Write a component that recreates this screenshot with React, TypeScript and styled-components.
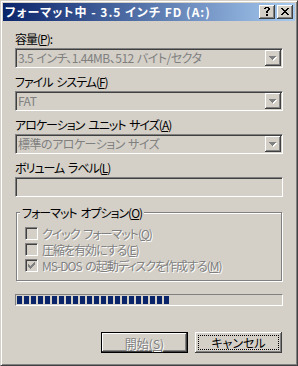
import React from 'react';
import styled, { createGlobalStyle, css } from 'styled-components';

const FACE = '#d4d0c8';
const SHADOW = '#808080';
const DARK = '#404040';
const LIGHT = '#ffffff';
const NAVY = '#0a246a';

const GlobalStyle = createGlobalStyle`
  html, body {
    margin: 0;
    padding: 0;
    background: ${FACE};
  }
`;

const raised = css`
  box-shadow: inset -1px -1px 0 ${DARK}, inset 1px 1px 0 ${LIGHT}, inset -2px -2px 0 ${SHADOW};
`;

const sunken = css`
  border: 1px solid;
  border-color: ${SHADOW} ${LIGHT} ${LIGHT} ${SHADOW};
  box-shadow: inset 1px 1px 0 ${DARK}, inset -1px -1px 0 ${FACE};
`;

const disabledText = css`
  color: ${SHADOW};
  text-shadow: 1px 1px 0 ${LIGHT};
`;

// pixel patterns for the classic glyphs
const HELP = [
  '.####.',
  '##..##',
  '....##',
  '...##.',
  '..##..',
  '..##..',
  '......',
  '..##..',
  '..##..',
];

const CLOSE = [
  '##....##',
  '.##..##.',
  '..####..',
  '...##...',
  '..####..',
  '.##..##.',
  '##....##',
];

const ARROW = ['#######', '.#####.', '..###..', '...#...'];

const CHECK = [
  '......#',
  '.....##',
  '#...###',
  '##.###.',
  '#####..',
  '.###...',
  '..#....',
];

const Glyph: React.FC<{ rows: string[]; color: string; emboss?: boolean }> = ({ rows, color, emboss }) => {
  const d = rows
    .map((r, y) => [...r].map((c, x) => (c === '#' ? `M${x} ${y}h1v1h-1z` : '')).join(''))
    .join('');
  const w = rows[0].length + (emboss ? 1 : 0);
  const h = rows.length + (emboss ? 1 : 0);
  return (
    <GlyphSvg width={w} height={h} viewBox={`0 0 ${w} ${h}`} shapeRendering='crispEdges'>
      {emboss && <path d={d} fill={LIGHT} transform='translate(1 1)' />}
      <path d={d} fill={color} />
    </GlyphSvg>
  );
};

const Combo: React.FC<{ value: string }> = ({ value }) => (
  <ComboBox>
    <ComboText>{value}</ComboText>
    <DropButton>
      <Glyph rows={ARROW} color={SHADOW} emboss />
    </DropButton>
  </ComboBox>
);

const Check: React.FC<{ checked?: boolean; children: React.ReactNode }> = ({ checked, children }) => (
  <CheckRow>
    <CheckBox>{checked && <Glyph rows={CHECK} color={SHADOW} />}</CheckBox>
    <CheckLabel>{children}</CheckLabel>
  </CheckRow>
);

const App: React.FC = () => (
  <>
    <GlobalStyle />
    <Window>
      <TitleBar>
        <Title>フォーマット中 - 3.5 インチ FD (A:)</Title>
        <CaptionButton $pad='2px 0 0 5px' aria-label='ヘルプ'>
          <Glyph rows={HELP} color='#000' />
        </CaptionButton>
        <CaptionButton $pad='3px 0 0 4px' $gap aria-label='閉じる'>
          <Glyph rows={CLOSE} color='#000' />
        </CaptionButton>
      </TitleBar>
      <Body>
        <Field>
          <Label>
            容量(<u>P</u>):
          </Label>
          <Combo value='3.5 インチ、1.44MB、512 バイト/セクタ' />
        </Field>
        <Field>
          <Label>
            ファイル システム(<u>F</u>)
          </Label>
          <Combo value='FAT' />
        </Field>
        <Field>
          <Label>
            アロケーション ユニット サイズ(<u>A</u>)
          </Label>
          <Combo value='標準のアロケーション サイズ' />
        </Field>
        <Field>
          <Label>
            ボリューム ラベル(<u>L</u>)
          </Label>
          <TextBox />
        </Field>
        <Group>
          <GroupTitle>
            フォーマット オプション(<u>O</u>)
          </GroupTitle>
          <Check>
            クイック フォーマット(<u>Q</u>)
          </Check>
          <Check>
            圧縮を有効にする(<u>E</u>)
          </Check>
          <Check checked>
            MS-DOS の起動ディスクを作成する(<u>M</u>)
          </Check>
        </Group>
        <Progress>
          {Array.from({ length: 22 }).map((_, i) => (
            <Chunk key={i} />
          ))}
        </Progress>
        <ButtonRow>
          <PushButton $isDefault disabled>
            <ButtonText $disabled>
              開始(<u>S</u>)
            </ButtonText>
          </PushButton>
          <PushButton>
            <FocusRect>キャンセル</FocusRect>
          </PushButton>
        </ButtonRow>
      </Body>
    </Window>
  </>
);

const Window = styled.div`
  box-sizing: border-box;
  width: 298px;
  height: 366px;
  padding: 2px;
  display: flex;
  flex-direction: column;
  background: ${FACE};
  border: 1px solid;
  border-color: ${FACE} ${DARK} ${DARK} ${FACE};
  box-shadow: inset 1px 1px 0 ${LIGHT}, inset -1px -1px 0 ${SHADOW};
  font-family: 'Noto Sans CJK JP', 'Liberation Sans', sans-serif;
  font-size: 12px;
  font-feature-settings: 'palt' 1;
  letter-spacing: -1px;
  word-spacing: 2px;
  color: #000;
`;

const TitleBar = styled.div`
  height: 18px;
  flex-shrink: 0;
  display: flex;
  align-items: center;
  padding: 0 2px;
  background: linear-gradient(to right, ${NAVY}, #a6caf0);
`;

const Title = styled.span`
  flex: 1;
  color: #fff;
  font-weight: bold;
  line-height: 18px;
  letter-spacing: 1px;
  word-spacing: 0;
  white-space: nowrap;
`;

const CaptionButton = styled.button<{ $pad: string; $gap?: boolean }>`
  box-sizing: border-box;
  width: 16px;
  height: 14px;
  margin: 0 0 0 ${(p) => (p.$gap ? 2 : 0)}px;
  padding: ${(p) => p.$pad};
  display: flex;
  align-items: flex-start;
  justify-content: flex-start;
  background: ${FACE};
  border: none;
  ${raised}
`;

const GlyphSvg = styled.svg`
  display: block;
  flex-shrink: 0;
`;

const Body = styled.div`
  display: flex;
  flex-direction: column;
  padding: 11px 12px 0;
`;

const Field = styled.div`
  display: flex;
  flex-direction: column;
  margin-bottom: 7px;
`;

const Label = styled.div`
  height: 14px;
  line-height: 14px;
  margin-bottom: 2px;
  white-space: nowrap;
`;

const ComboBox = styled.div`
  box-sizing: border-box;
  height: 20px;
  padding: 1px;
  display: flex;
  align-items: center;
  background: ${FACE};
  ${sunken}
`;

const ComboText = styled.span`
  flex: 1;
  padding-left: 1px;
  line-height: 16px;
  letter-spacing: -0.5px;
  word-spacing: 1px;
  color: ${SHADOW};
  white-space: nowrap;
  overflow: hidden;
`;

const DropButton = styled.span`
  box-sizing: border-box;
  width: 16px;
  height: 16px;
  padding: 6px 0 0 4px;
  display: flex;
  align-items: flex-start;
  background: ${FACE};
  ${raised}
`;

const TextBox = styled.div`
  box-sizing: border-box;
  height: 20px;
  background: ${FACE};
  ${sunken}
`;

const Group = styled.div`
  position: relative;
  margin: 8px 1px 0;
  padding: 13px 8px 6px;
  border: 1px solid ${SHADOW};
  box-shadow: inset 1px 1px 0 ${LIGHT}, 1px 1px 0 ${LIGHT};
`;

const GroupTitle = styled.span`
  position: absolute;
  top: -7px;
  left: 3px;
  padding: 0 2px;
  line-height: 14px;
  background: ${FACE};
  white-space: nowrap;
`;

const CheckRow = styled.div`
  height: 16px;
  display: flex;
  align-items: flex-start;
`;

const CheckBox = styled.span`
  box-sizing: border-box;
  width: 13px;
  height: 13px;
  margin-top: 1px;
  padding: 2px;
  display: flex;
  background: ${FACE};
  ${sunken}
`;

const CheckLabel = styled.span`
  margin-left: 4px;
  line-height: 15px;
  white-space: nowrap;
  ${disabledText}
`;

const Progress = styled.div`
  box-sizing: border-box;
  height: 12px;
  margin-top: 13px;
  padding: 1px;
  display: flex;
  gap: 2px;
  border: 1px solid;
  border-color: ${SHADOW} ${LIGHT} ${LIGHT} ${SHADOW};
`;

const Chunk = styled.span`
  width: 5px;
  height: 8px;
  background: ${NAVY};
`;

const ButtonRow = styled.div`
  display: flex;
  justify-content: flex-end;
  gap: 7px;
  margin-top: 26px;
  padding-right: 1px;
`;

const PushButton = styled.button<{ $isDefault?: boolean }>`
  box-sizing: border-box;
  width: 87px;
  height: 21px;
  padding: 3px;
  display: flex;
  background: ${FACE};
  font: inherit;
  letter-spacing: 0;
  color: #000;
  border: ${(p) => (p.$isDefault ? '1px solid #000' : 'none')};
  ${raised}
`;

const ButtonText = styled.span<{ $disabled?: boolean }>`
  flex: 1;
  line-height: 15px;
  text-align: center;
  ${(p) => p.$disabled && disabledText}
`;

const FocusRect = styled.span`
  flex: 1;
  line-height: 13px;
  text-align: center;
  border: 1px dotted #000;
`;

export default App;
